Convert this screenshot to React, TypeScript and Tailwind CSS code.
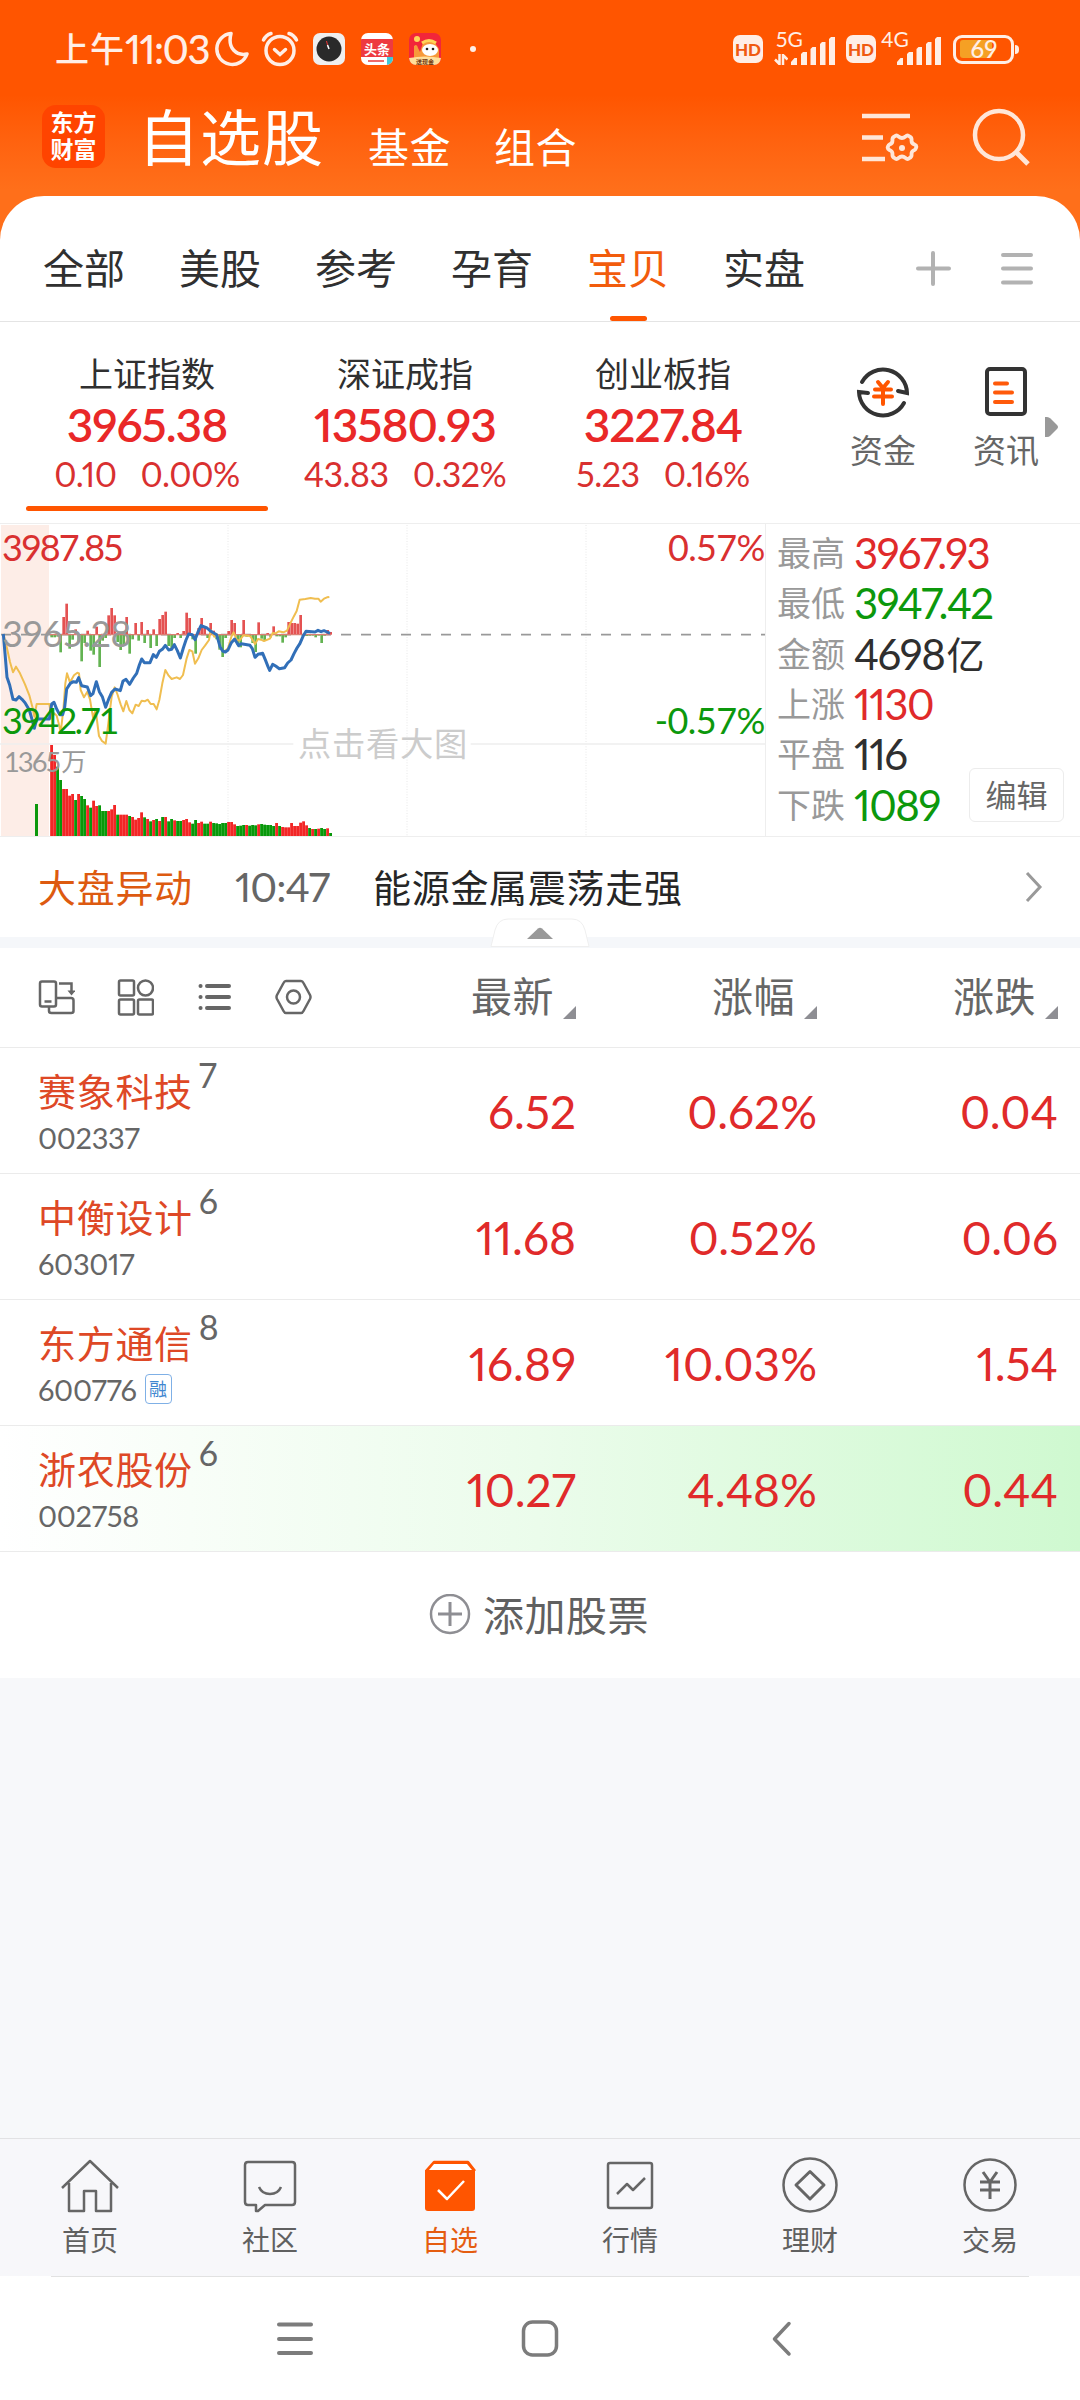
import React from 'react';

interface IndexItem {
  name: string;
  price: string;
  change: string;
  percent: string;
}

interface Stock {
  name: string;
  count: string;
  code: string;
  price: string;
  percent: string;
  change: string;
  margin?: boolean;
  flash?: boolean;
}

const groups = ['全部', '美股', '参考', '孕育', '宝贝', '实盘'];

const indexes: IndexItem[] = [
  { name: '上证指数', price: '3965.38', change: '0.10', percent: '0.00%' },
  { name: '深证成指', price: '13580.93', change: '43.83', percent: '0.32%' },
  { name: '创业板指', price: '3227.84', change: '5.23', percent: '0.16%' },
];

const stats = [
  { label: '最高', value: '3967.93', color: 'text-[#e02a2a]' },
  { label: '最低', value: '3947.42', color: 'text-[#0c980c]' },
  { label: '金额', value: '4698', unit: '亿', color: 'text-[#2f2f2f]' },
  { label: '上涨', value: '1130', color: 'text-[#e02a2a]' },
  { label: '平盘', value: '116', color: 'text-[#2f2f2f]' },
  { label: '下跌', value: '1089', color: 'text-[#0c980c]' },
];

const stocks: Stock[] = [
  { name: '赛象科技', count: '7', code: '002337', price: '6.52', percent: '0.62%', change: '0.04' },
  { name: '中衡设计', count: '6', code: '603017', price: '11.68', percent: '0.52%', change: '0.06' },
  { name: '东方通信', count: '8', code: '600776', price: '16.89', percent: '10.03%', change: '1.54', margin: true },
  { name: '浙农股份', count: '6', code: '002758', price: '10.27', percent: '4.48%', change: '0.44', flash: true },
];

// One bar per minute, 9 units apart. r = up, g = down
const volumeColors =
  'rrggrrrrgrggrgrrgggrrrgrrrgrrrrgrgrgrgrggrggrrrggrrggrgggggrrrgggrgggrgggggrgrrrrrrrrrgrgrggrg';
const volumeHeights = [
  273, 243, 208, 168, 141, 141, 121, 126, 108, 126, 120, 111, 92, 85, 106, 90, 92, 75, 75, 75, 80, 93,
  64, 64, 64, 64, 60, 57, 49, 54, 71, 56, 51, 44, 48, 51, 45, 57, 57, 44, 51, 47, 45, 45, 48, 51, 41,
  37, 48, 39, 43, 37, 37, 43, 39, 38, 36, 39, 39, 42, 42, 35, 30, 31, 33, 33, 31, 33, 32, 35, 36, 34,
  33, 33, 30, 39, 30, 27, 26, 26, 39, 30, 30, 40, 44, 32, 24, 21, 21, 22, 24, 21, 23, 9,
];
const momentum = [
  -8, -8, -6, -53, 53, 93, -42, -15, 16, -20, -80, -25, 12, -48, -60, 24, -97, -18, -10, 58, 80, 58,
  -22, -46, -30, 53, -57, -14, 35, -18, 38, -25, 14, -40, 16, -34, 47, 59, 69, -34, -45, -10, 5, -10,
  11, 66, 50, -14, -57, 20, 50, 24, -10, 35, 12, -14, -45, -67, -10, 11, 44, 35, -30, -38, 44, -6, -5,
  -25, -52, 37, -12, -16, 5, -8, 25, -5, -5, -24, -8, 38, 35, 35, 33, 59, -4, -4, -3, -3, -8, -3, -25,
  -3, 14, 8,
];

const priceLine =
  '10,372 15,430 21,502 29,525 39,568 48,570 57,560 66,568 75,578 88,600 97,632 103,655 110,627 148,627 155,582 162,577 170,597 179,614 188,614 194,592 200,537 211,520 220,515 229,517 236,503 245,527 262,531 272,557 279,551 289,515 298,545 307,560 317,592 327,565 335,547 345,537 361,542 369,513 378,508 389,523 400,504 410,490 418,465 425,447 433,458 450,458 460,434 469,442 478,424 487,418 496,406 506,420 515,418 523,404 532,422 541,444 550,414 558,390 566,372 577,374 585,389 594,366 603,347 621,354 630,362 640,368 650,374 660,410 668,423 676,426 684,420 694,398 704,387 716,407 724,401 750,406 757,416 765,442 774,433 788,430 797,452 804,470 809,481 818,463 827,468 838,476 854,473 863,459 873,450 882,431 891,414 900,400 910,377 918,364 945,366 954,361 963,365 972,362 981,366 990,370';
const averageLine =
  '10,372 20,410 30,456 39,487 48,470 60,490 75,523 88,556 97,590 103,620 110,582 148,582 155,625 163,610 170,617 176,640 182,667 190,600 196,520 201,490 210,517 222,496 232,488 237,490 242,540 252,562 262,545 270,568 279,622 287,600 297,678 306,693 317,701 325,640 335,560 344,532 352,552 362,583 370,604 379,573 388,600 397,610 407,584 416,588 425,572 434,574 443,569 452,582 461,582 470,598 478,570 487,520 496,480 506,497 515,507 530,502 540,507 549,495 560,445 568,420 577,424 585,461 595,445 605,420 615,407 627,390 632,360 643,380 652,374 661,415 672,425 684,415 694,380 701,367 711,392 720,390 730,376 744,377 752,380 765,402 774,387 783,389 792,393 810,386 818,369 827,370 836,364 850,367 861,362 871,340 881,320 890,303 899,269 916,267 932,264 945,266 955,266 962,275 972,266 981,262 988,261';

const Num = 'font-[Lato,sans-serif] proportional-nums';

const HdBadge: React.FC = () => (
  <div className="flex h-7 w-[30px] items-center justify-center rounded-[7px] bg-[#ffeee6] font-[Lato,sans-serif] text-[17px] leading-none font-black text-[#f05a10]">
    HD
  </div>
);

const SignalBars: React.FC = () => (
  <svg width="44" height="28" viewBox="0 0 44 28" fill="#ffeee6">
    <path d="M0 28v-3l3.500-4H6v7zM10 28V17l2-2h4v13zM19.500 28V12l2-2h3.500v18zM29 28V7l2-2h3.500v23zM38 28V2l2-2h4v28z" />
  </svg>
);

const StatusBar: React.FC = () => (
  <div className="flex h-[98px] items-center pr-[61px] pl-[55px] text-[#ffeee6]">
    <span className="pb-0.5 text-[34px] leading-none font-medium tracking-[1px]">上午</span>
    <span className={`${Num} w-[85px] text-[40px] leading-none font-medium tracking-[-1.500px]`}>11:03</span>
    <svg className="ml-[4px]" width="36" height="36" viewBox="0 0 36 36" fill="none" stroke="currentColor" strokeWidth="3.500" strokeLinejoin="round">
      <path d="M17 2.500A15.500 15.500 0 1 0 33 23C23 25 13 18 17 2.500Z" />
    </svg>
    <svg className="ml-[11px]" width="38" height="36" viewBox="0 0 38 36" fill="none" stroke="currentColor" strokeWidth="3.500" strokeLinecap="round">
      <circle cx="19" cy="19.500" r="14" />
      <path d="M13.500 18.500l5.500 5 5.500-5" />
      <path d="M2.500 9Q5 4 10 2.500M35.500 9Q33 4 28 2.500" />
    </svg>
    <svg className="ml-[14px]" width="32" height="32" viewBox="0 0 32 32">
      <rect width="32" height="32" rx="7" fill="#efefef" />
      <circle cx="16" cy="16" r="12.500" fill="#2a2a2a" />
      <path d="M16 16l-1.500-4" stroke="#fff" strokeWidth="1.500" />
      <path d="M14.500 12l-1-4" stroke="#e33" strokeWidth="1" />
    </svg>
    <div className="ml-4 flex h-8 w-8 flex-col overflow-hidden rounded-[7px] bg-white pt-[6px]">
      <div className="flex h-5 items-center justify-center bg-[#ee3a40] text-[13px] leading-none font-bold text-white">头条</div>
      <div className="flex items-center justify-between">
        <span className="ml-[7px] h-0.5 w-4 bg-[#ee6a6a]" />
        <span className="h-2 w-1.5 bg-[#3cc8d8]" />
      </div>
    </div>
    <svg className="ml-4" width="32" height="32" viewBox="0 0 32 32">
      <rect width="32" height="32" rx="7" fill="#f2263a" />
      <circle cx="8" cy="6" r="3" fill="#ffd45a" />
      <path d="M5 26V13q3-3 4 2l2 4 3-9q6-6 12 0l4 6v10z" fill="#f79a3a" />
      <path d="M13 10q7-5 14 0" stroke="#ffd45a" strokeWidth="3" fill="none" />
      <ellipse cx="21" cy="17" rx="8" ry="6" fill="#fff" />
      <circle cx="18" cy="16" r="1.300" fill="#222" />
      <circle cx="24" cy="16" r="1.300" fill="#222" />
      <path d="M0 25q16-3 32 0-1 7-7 7H7q-6 0-7-7z" fill="#ffdf9a" />
      <text x="16" y="31" fontSize="6" textAnchor="middle" fill="#713510" fontWeight="700">送现金</text>
    </svg>
    <div className="ml-[29px] h-1.5 w-1.5 rounded-full bg-[#ffeee6]" />

    <div className="ml-auto flex items-center">
      <HdBadge />
      <div className="ml-[11px] flex h-8 w-[61px] flex-col">
        <span className={`${Num} h-0 pl-0.5 text-[21px] leading-[12px]`}>5G</span>
        <div className="flex gap-[3px] pt-1">
          <svg className="mt-[17px]" width="14" height="11" viewBox="0 0 14 11" stroke="currentColor" strokeWidth="2.500" fill="none">
            <path d="M5.500 0v11M5.500 10L1 5.500M9 11V0M9 1l4.500 4.500" />
          </svg>
          <SignalBars />
        </div>
      </div>
      <div className="ml-[11px]">
        <HdBadge />
      </div>
      <div className="ml-[5px] flex h-8 w-[60px] flex-col">
        <span className={`${Num} h-0 text-[21px] leading-[12px]`}>4G</span>
        <div className="flex justify-end pt-1">
          <SignalBars />
        </div>
      </div>
      <div className="ml-[12px] flex h-[29px] w-[61px] items-center rounded-[9px] border-[3px] border-[#ffeee6] pl-1">
        <div className="h-[18px] w-8 rounded-[3px] bg-[#f5a024]">
          <span className={`${Num} block w-[48px] text-center text-[24px] leading-[17px] font-medium`}>69</span>
        </div>
      </div>
      <div className="ml-[1px] h-[9px] w-1 rounded-r bg-[#ffeee6]" />
    </div>
  </div>
);

const TitleBar: React.FC = () => (
  <div className="flex h-[98px] pl-[42px] text-white">
    <div className="mt-[7px] flex h-[63px] w-[63px] flex-col items-center justify-center rounded-[14px] bg-[#ff4400] pb-1 text-[23px] leading-[27px] font-bold">
      <span>东方</span>
      <span>财富</span>
    </div>
    <span className="ml-[33px] text-[61px] leading-[74px] tracking-[1px]">自选股</span>
    <span className="ml-[44px] pt-[29px] text-[41px] leading-[36px] tracking-[0.500px]">基金</span>
    <span className="ml-[43px] pt-[29px] text-[41px] leading-[36px] tracking-[0.500px]">组合</span>
    <svg className="mt-3 ml-auto" width="58" height="56" viewBox="0 0 58 56" fill="none" stroke="#ffe6d8" strokeWidth="4.500">
      <path d="M1 6h48M1 27.500h21M1 49h23" />
      <path
        d="M33.500 26.500q2-2 4 0 3.500 3 7 0 2-2 4 0 2.500 1 2 4 0 3 3 4 2.500 1 1.500 3.500-.500 1.500-1.500 2-3 1-3 4 .500 3-2 4-2 2-4 0-3.500-3-7 0-2 2-4 0-2.500-1-2-4 0-3-3-4-2.500-1.500-1.500-3.500.500-1.500 1.500-2 3-1 3-4-.500-3 2-4z"
        strokeWidth="3.800"
        strokeLinejoin="round"
      />
      <circle cx="41" cy="38" r="3" fill="#ffe6d8" stroke="none" />
    </svg>
    <svg className="mt-2.5 mr-[49px] ml-[52px]" width="60" height="60" viewBox="0 0 60 60" fill="none" stroke="#ffe6d8" strokeWidth="4.500">
      <circle cx="28" cy="27" r="24" />
      <path d="M44 43l13 13" strokeWidth="5" />
    </svg>
  </div>
);

const GroupTabs: React.FC = () => (
  <div className="flex h-[126px] border-b border-[#e4e4e4] pl-4">
    {groups.map((group) => {
      const active = group === '宝贝';
      return (
        <div key={group} className="flex w-[136px] flex-col items-center justify-between pt-[50px]">
          <span className={`text-[41px] leading-[41px] ${active ? 'text-[#f25c0c]' : 'text-[#303030]'}`}>{group}</span>
          {active && <span className="h-[5px] w-[37px] rounded-full bg-[#ff5500]" />}
        </div>
      );
    })}
    <svg className="mt-[54px] ml-[83px]" width="36" height="36" viewBox="0 0 36 36" stroke="#b2b2b2" strokeWidth="4" strokeLinecap="round">
      <path d="M18 3v31M3 18.500h31" />
    </svg>
    <svg className="mt-[54px] ml-[49px]" width="34" height="36" viewBox="0 0 34 36" stroke="#b2b2b2" strokeWidth="4" strokeLinecap="round">
      <path d="M3 5h28M3 18.500h28M3 32.500h28" />
    </svg>
  </div>
);

const IndexPanel: React.FC = () => (
  <div className="flex h-[201px] pl-[18px]">
    {indexes.map((item, i) => (
      <div key={item.name} className="flex w-[258px] flex-col items-center pt-[33px]">
        <span className="text-[34px] leading-[36px] text-[#303030]">{item.name}</span>
        <span className={`${Num} mt-[11px] text-[46px] leading-[46px] font-semibold tracking-[-1px] text-[#e92828]`}>{item.price}</span>
        <div className={`${Num} mt-[9px] flex gap-6 text-[34px] leading-[34px] tracking-[-0.500px] text-[#d93030]`}>
          <span>{item.change}</span>
          <span>{item.percent}</span>
        </div>
        {i === 0 && <span className="mt-[15px] h-[5px] w-[242px] rounded-full bg-[#ff5500]" />}
      </div>
    ))}
    <div className="ml-[50px] flex w-[82px] flex-col items-center pt-[43px]">
      <svg width="54" height="54" viewBox="0 0 54 54" fill="none" stroke="#333" strokeWidth="4" strokeLinecap="round">
        <path d="M6 17A24 24 0 0 1 51 28L42 26M48 38A24 24 0 0 1 3 27L12 28" strokeLinejoin="miter" />
        <path d="M22 17l5 6 5-6M19 24.500h16M18 31.500h18M27 24v15" stroke="#ff5500" />
      </svg>
      <span className="mt-[12px] text-[33px] leading-[36px] whitespace-nowrap text-[#666]">资金</span>
    </div>
    <div className="ml-[41px] flex w-[82px] flex-col items-center pt-[43px]">
      <svg width="54" height="54" viewBox="0 0 54 54" fill="none" stroke="#333" strokeWidth="4" strokeLinecap="round">
        <rect x="8" y="4" width="38" height="45" rx="3" />
        <path d="M16 18.500h12M16 27.500h17M16 37h17" stroke="#ff5a0a" />
      </svg>
      <span className="mt-[12px] text-[33px] leading-[36px] whitespace-nowrap text-[#666]">资讯</span>
    </div>
    <svg className="mt-[95px] -ml-[2px]" width="13" height="20" viewBox="0 0 13 20" fill="#999">
      <path d="M0 0h2q2 0 3.500 1.500L12 8q2 2 0 4L5.500 18.500Q4 20 2 20H0z" />
    </svg>
  </div>
);

const TrendChart: React.FC = () => (
  <svg width="765" height="312" viewBox="0 42 2295 936">
    <rect x="3" y="45" width="144" height="933" fill="#fdede7" />
    <path d="M684 45V978M1221 45V978M1758 45V978" stroke="#e8e8e8" strokeWidth="3" strokeDasharray="3 5" />
    <path d="M0 702H880M1412 702H2295" stroke="#eeeeee" strokeWidth="5" />
    <path d="M3 374H2295" stroke="#999" strokeWidth="5" strokeDasharray="30 30" />
    {momentum.map((value, i) => (
      <rect
        key={i}
        x={151 + i * 9}
        y={value > 0 ? 374 - value : 374}
        width="8"
        height={Math.abs(value)}
        fill={value > 0 ? '#e45252' : '#63b352'}
      />
    ))}
    <path d="M150 374H992" stroke="#dc7f74" strokeWidth="4" />
    <rect x="105" y="882" width="9" height="96" fill="#0c980c" />
    {volumeHeights.map((height, i) => (
      <rect
        key={i}
        x={150.5 + i * 9}
        y={978 - height}
        width="8.500"
        height={height}
        fill={volumeColors[i] === 'r' ? '#f22626' : '#08980a'}
      />
    ))}
    <polyline points={averageLine} fill="none" stroke="#f0be50" strokeWidth="6" strokeLinejoin="round" />
    <polyline points={priceLine} fill="none" stroke="#316fb8" strokeWidth="9" strokeLinejoin="round" />
    <g fontFamily="Lato, 'Noto Sans CJK SC', sans-serif" fontSize="108">
      <text x="6" y="153" fill="#d93030" textLength="366">3987.85</text>
      <text x="6" y="411" fill="#999" textLength="388">3965.28</text>
      <text x="6" y="671" fill="#0c980c" textLength="352">3942.71</text>
      <text x="2296" y="153" fill="#d93030" textAnchor="end" textLength="292">0.57%</text>
      <text x="2296" y="671" fill="#0c980c" textAnchor="end" textLength="332">-0.57%</text>
      <text x="12" y="786" fill="#999" fontSize="82" textLength="172">1365</text>
      <text x="184" y="784" fill="#999" fontSize="76">万</text>
      <text x="894" y="739" fill="#ccc" fontSize="100" textLength="508">点击看大图</text>
    </g>
  </svg>
);

const MarketPanel: React.FC = () => (
  <div className="flex h-[314px] border-t border-b border-[#eee]">
    <TrendChart />
    <div className="flex flex-1 border-l border-[#eee] pl-[11px]">
      <div className="flex w-[192px] flex-col pt-1">
        {stats.map((stat) => (
          <div key={stat.label} className="flex h-[50.300px] items-center whitespace-nowrap">
            <span className="w-[77px] shrink-0 pb-0.5 text-[34px] leading-none text-[#999]">{stat.label}</span>
            <span className={`${Num} text-[42px] leading-none tracking-[-1.500px] ${stat.color}`}>{stat.value}</span>
            {stat.unit && <span className="ml-0.5 pb-0.5 text-[38px] leading-none text-[#2f2f2f]">{stat.unit}</span>}
          </div>
        ))}
      </div>
      <div className="mt-auto mb-[14px] flex h-[54px] w-[95px] items-center justify-center rounded-md border border-[#ececec] pb-1 text-[31px] leading-none text-[#666]">
        编辑
      </div>
    </div>
  </div>
);

const AlertRow: React.FC = () => (
  <div className="relative flex h-[100px] items-center pr-[37px] pl-[38px]">
    <span className="w-[197px] pb-[3px] text-[38px] leading-none tracking-[0.700px] text-[#dd5a10]">大盘异动</span>
    <span className={`${Num} w-[138px] pb-0.5 text-[41px] leading-none tracking-[-1px] text-[#666]`}>10:47</span>
    <span className="pb-[3px] text-[38px] leading-none tracking-[0.700px] text-[#262626]">能源金属震荡走强</span>
    <svg className="ml-auto" width="18" height="32" viewBox="0 0 18 32" fill="none" stroke="#999" strokeWidth="3">
      <path d="M2 2l13 14L2 30" />
    </svg>
    {/* collapse handle */}
    <svg className="absolute top-[81px] left-[490px]" width="100" height="29" viewBox="0 0 100 29">
      <path d="M1 28.500L5 12Q8 1 18 1H82Q92 1 95 12L99 28.500z" fill="#fff" stroke="#efefef" strokeWidth="1" />
      <path d="M37 21L48 10.500q2-1.500 4 0L63 21z" fill="#999" />
    </svg>
  </div>
);

const SortLabel: React.FC<{ text: string; width: string }> = ({ text, width }) => (
  <div className={`flex justify-end gap-[9px] ${width}`}>
    <span className="text-[41px] leading-none tracking-[0.500px] whitespace-nowrap text-[#666]">{text}</span>
    <svg className="mt-[32px]" width="13" height="13" viewBox="0 0 13 13" fill="#8e8e93">
      <path d="M13 0v13H0z" />
    </svg>
  </div>
);

const TableHeader: React.FC = () => (
  <div className="flex h-[99px] items-center pr-[22px] pb-0.5 pl-[37px]">
    <div className="flex w-[281px] gap-[41px]">
      <svg width="38" height="38" viewBox="0 0 38 38" fill="none" stroke="#666" strokeWidth="2.500">
        <rect x="3" y="3.500" width="16" height="25" rx="2" />
        <path d="M7.500 23.500h7M19 20h15q2.500 0 2.500 2.500v10.500q0 2-2.500 2H14.500q-2.500 0-2.500-2v-4.500M22 5.500h12.500v9" />
        <path d="M30.500 12.500h8L34.500 17.500z" fill="#666" stroke="none" />
      </svg>
      <svg width="38" height="38" viewBox="0 0 38 38" fill="none" stroke="#666" strokeWidth="2.500">
        <rect x="3" y="2.500" width="15" height="15" rx="1.500" />
        <circle cx="29.500" cy="10" r="7.500" />
        <rect x="3" y="21.500" width="15" height="15" rx="1.500" />
        <rect x="22" y="21.500" width="15" height="15" rx="1.500" />
      </svg>
      <svg width="38" height="38" viewBox="0 0 38 38" stroke="#666" strokeWidth="4" strokeLinecap="round">
        <path d="M12 8h22M12 19h22M12 30h22M5.500 8h.1M5.500 19h.1M5.500 30h.1" />
      </svg>
      <svg width="38" height="38" viewBox="0 0 38 38" fill="none" stroke="#666" strokeWidth="2.500" strokeLinejoin="round">
        <path d="M12 3h15q1.500 0 2.500 2L36 17q1 2 0 4L29.500 33q-1 2-2.500 2H12q-1.500 0-2.500-2L3 21q-1-2 0-4L9.500 5q1-2 2.500-2z" />
        <circle cx="19.500" cy="19" r="6.500" />
      </svg>
    </div>
    <SortLabel text="最新" width="w-[258px]" />
    <SortLabel text="涨幅" width="w-[241px]" />
    <SortLabel text="涨跌" width="w-[241px]" />
  </div>
);

const StockRow: React.FC<{ stock: Stock }> = ({ stock }) => (
  <div
    className={`flex h-[126px] border-t border-[#ebebeb] pr-[22px] pl-[38px] ${
      stock.flash ? 'bg-linear-to-r from-white via-[#ebfceb] to-[#cff9d0]' : ''
    }`}
  >
    <div className="flex w-[280px] flex-col pt-[15px]">
      <div className="flex h-[53px]">
        <span className="pt-2 text-[38px] leading-[38px] tracking-[0.700px] text-[#de4826]">{stock.name}</span>
        <span className={`${Num} ml-1.5 text-[34px] leading-[24px] text-[#666]`}>{stock.count}</span>
      </div>
      <div className="flex h-[42px] items-center">
        <span className={`${Num} text-[29px] leading-none tracking-[-0.300px] text-[#666]`}>{stock.code}</span>
        {stock.margin && (
          <span className="ml-2 flex h-[30px] w-[27px] items-center justify-center rounded border border-[#7fb0e6] pb-0.5 text-[18px] leading-none text-[#3f86d0]">
            融
          </span>
        )}
      </div>
    </div>
    <div className={`${Num} flex items-center pt-0.5 text-right text-[46px] leading-none text-[#e02a2a]`}>
      <span className="w-[258px]">{stock.price}</span>
      <span className="w-[241px]">{stock.percent}</span>
      <span className="w-[241px]">{stock.change}</span>
    </div>
  </div>
);

const navItems = [
  {
    label: '首页',
    icon: <path d="M3 32L31 5l28 27M10 27v28h15V35h12v20h15V27" />,
  },
  {
    label: '社区',
    icon: <path d="M9 6h44q3 0 3 3v37q0 3-3 3H26l-7 6h-2v-6H9q-3 0-3-3V9q0-3 3-3zM20 31q3 7 11 7t11-7" />,
  },
  {
    label: '自选',
    active: true,
    icon: (
      <>
        <path d="M7 15l8-9h34l7 9" fill="#ff5500" stroke="#ff5500" />
        <path d="M6 14H56V52q0 3-3 3H9q-3 0-3-3z" fill="#ff5500" stroke="none" />
        <path d="M10 14l5-6h33l5 6z" fill="#fff" stroke="none" />
        <path d="M19 34l9 9 17-18" stroke="#fff" />
      </>
    ),
  },
  {
    label: '行情',
    icon: (
      <>
        <rect x="9" y="7" width="44" height="45" rx="2" />
        <path d="M18 38l10-10 6 6 12-12" />
      </>
    ),
  },
  {
    label: '理财',
    icon: (
      <>
        <circle cx="31" cy="29" r="26.500" />
        <path d="M31 15.500l14 13.500-14 14-14-14z" strokeWidth="3" />
      </>
    ),
  },
  {
    label: '交易',
    icon: (
      <>
        <circle cx="31" cy="29" r="25.500" />
        <path d="M24 16l7 10 7-10M21 26h20M21 34h20M31 26v17" strokeWidth="3" />
      </>
    ),
  },
];

const BottomNav: React.FC = () => (
  <div className="flex h-[138px] border-t border-[#e2e2e4] bg-[#f7f7fa]">
    {navItems.map((item) => (
      <div key={item.label} className="flex w-[180px] flex-col items-center pt-[17px]">
        <svg width="62" height="60" viewBox="0 0 62 60" fill="none" stroke="#666" strokeWidth="2.500" strokeLinejoin="round">
          {item.icon}
        </svg>
        <span className={`mt-[8px] text-[28px] leading-[30px] ${item.active ? 'text-[#e55d10]' : 'text-[#606060]'}`}>
          {item.label}
        </span>
      </div>
    ))}
  </div>
);

const App: React.FC = () => {
  return (
    <div className="flex h-[2400px] w-[1080px] flex-col overflow-hidden bg-white font-['Noto_Sans_CJK_SC',sans-serif]">
      <div className="bg-linear-to-b from-[#ff5500] from-[95px] to-[#ff6f1a] to-[190px]">
        <StatusBar />
        <TitleBar />
        <div className="rounded-t-[44px] bg-white">
          <GroupTabs />
        </div>
      </div>
      <IndexPanel />
      <MarketPanel />
      <AlertRow />
      <div className="h-[11px] bg-[#f5f7fa]" />
      <TableHeader />
      {stocks.map((stock) => (
        <StockRow key={stock.code} stock={stock} />
      ))}
      <div className="flex h-[127px] items-center justify-center gap-3 border-t border-[#ebebeb] pr-0.5 text-[#606060]">
        <svg width="42" height="42" viewBox="0 0 42 42" fill="none" stroke="#8e8e93" strokeWidth="2.500">
          <circle cx="21" cy="20" r="19" />
          <path d="M21 8v24M9 20h24" strokeWidth="3" />
        </svg>
        <span className="pb-1 text-[41px] leading-none tracking-[0.500px]">添加股票</span>
      </div>
      <div className="flex-1 bg-[#f7f8fa]" />
      <BottomNav />
      <div className="mx-[51px] h-px bg-[#e2e2e2]" />
      <div className="flex h-[123px] items-center justify-between px-[274px] text-[#7c7c7c]">
        <svg width="41" height="40" viewBox="0 0 41 40" stroke="currentColor" strokeWidth="4" strokeLinecap="round">
          <path d="M5 5.500h32M5 20h32M5 34h32" />
        </svg>
        <svg width="41" height="40" viewBox="0 0 41 40" fill="none" stroke="currentColor" strokeWidth="3.500">
          <rect x="3.500" y="3" width="33" height="33" rx="9" />
        </svg>
        <svg width="41" height="40" viewBox="0 0 41 40" fill="none" stroke="currentColor" strokeWidth="3.500" strokeLinecap="round" strokeLinejoin="round">
          <path d="M24 4.500L9.500 20 24 35" />
        </svg>
      </div>
    </div>
  );
};

export default App;
